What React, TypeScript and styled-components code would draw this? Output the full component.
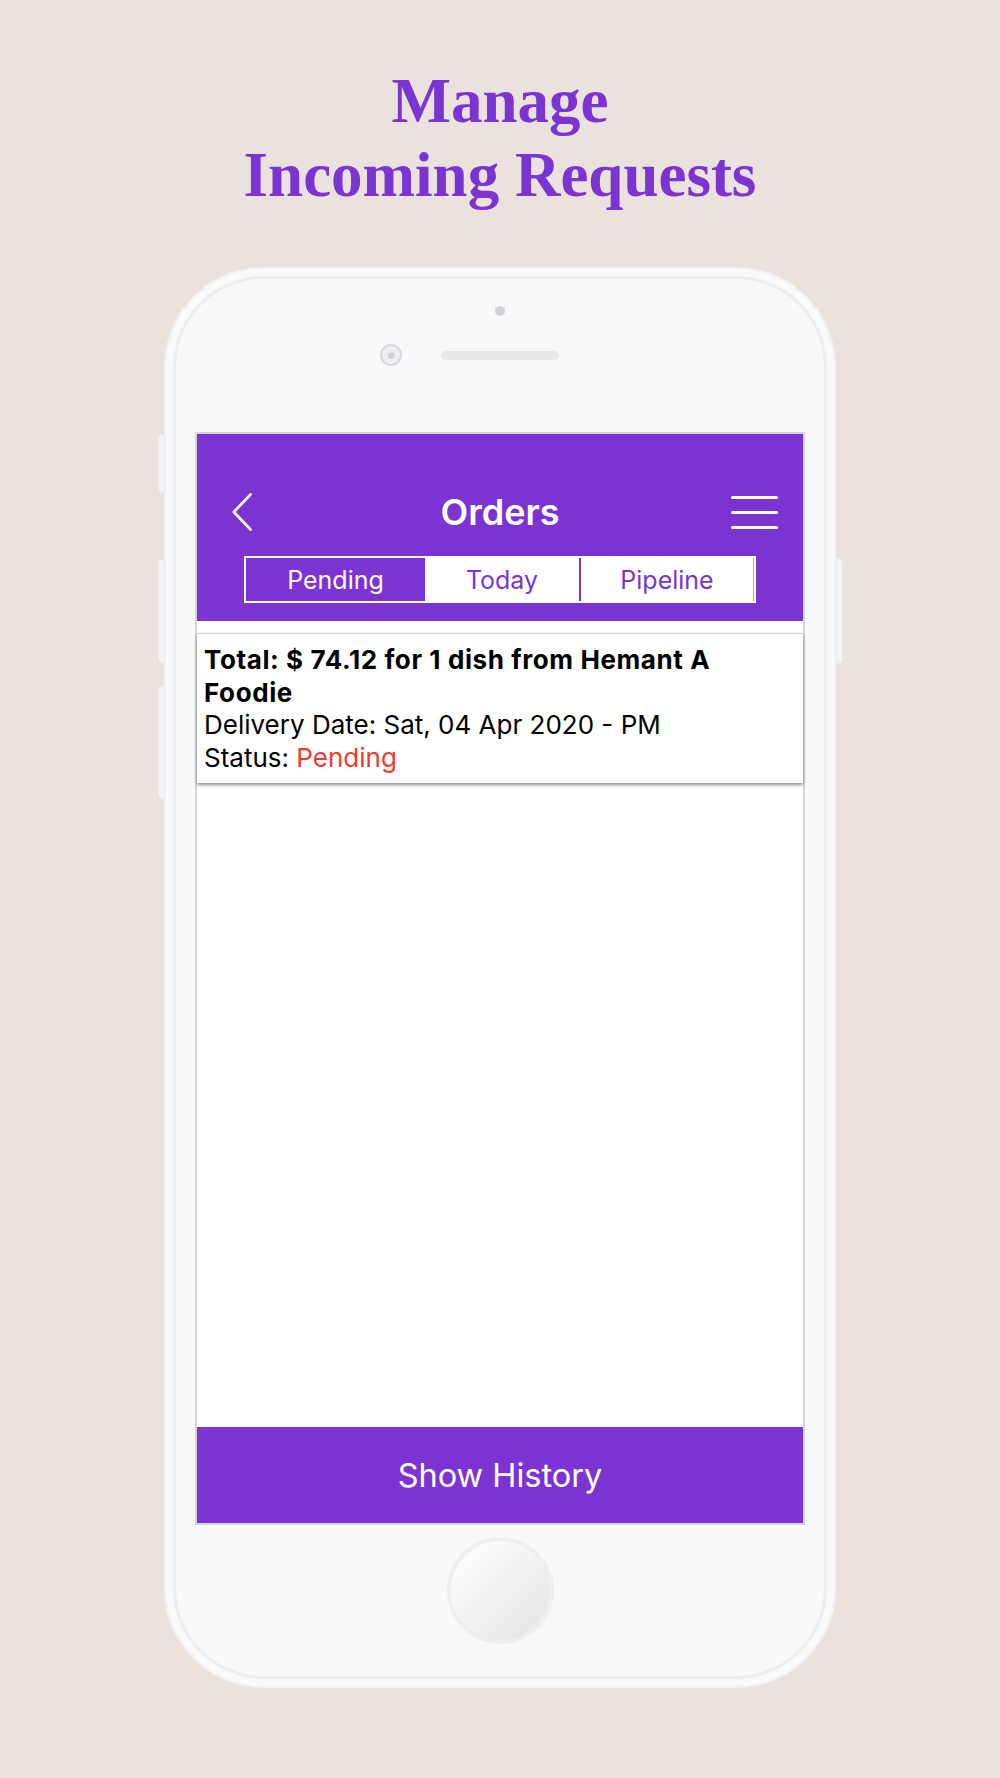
import React from "react";
import styled, { createGlobalStyle } from "styled-components";

const PURPLE = "#7b34d2";

const GlobalStyle = createGlobalStyle`
  html, body {
    margin: 0;
    padding: 0;
    background: #ece2dd;
  }
  body {
    font-family: Inter, Roboto, "Liberation Sans", sans-serif;
  }
`;

type Segment = { label: string; active?: boolean; divider?: boolean };

const segments: Segment[] = [
  { label: "Pending", active: true },
  { label: "Today" },
  { label: "Pipeline", divider: true },
];

const App = () => {
  return (
    <Page>
      <GlobalStyle />
      <Title>
        Manage
        <br />
        Incoming Requests
      </Title>
      <Phone>
        <SideButton $side="left" $top={165} $height={59} />
        <SideButton $side="left" $top={290} $height={104} />
        <SideButton $side="left" $top={417} $height={113} />
        <SideButton $side="right" $top={289} $height={106} />
        <TopBezel>
          <FrontSensor />
          <EarRow>
            <Camera />
            <Speaker />
          </EarRow>
        </TopBezel>
        <Screen>
          <Header>
            <NavRow>
              <BackButton>
                <svg width="22" height="38" viewBox="0 0 22 38" fill="none">
                  <path
                    d="M19.5 1.5 L2.8 19 L19.5 36.5"
                    stroke="#fff"
                    strokeWidth="2.6"
                    strokeLinecap="round"
                    strokeLinejoin="round"
                  />
                </svg>
              </BackButton>
              <NavTitle>Orders</NavTitle>
              <MenuButton>
                <span />
                <span />
                <span />
              </MenuButton>
            </NavRow>
            <SegmentBar>
              {segments.map((s) => (
                <SegmentItem key={s.label} $active={s.active} $divider={s.divider}>
                  {s.label}
                </SegmentItem>
              ))}
            </SegmentBar>
          </Header>
          <OrderCard>
            <OrderTitle>Total: $ 74.12 for 1 dish from Hemant A Foodie</OrderTitle>
            <OrderLine>Delivery Date: Sat, 04 Apr 2020 - PM</OrderLine>
            <OrderLine>
              Status: <StatusText>Pending</StatusText>
            </OrderLine>
          </OrderCard>
          <Filler />
          <HistoryButton>Show History</HistoryButton>
        </Screen>
        <HomeButton />
      </Phone>
    </Page>
  );
};

const Page = styled.main`
  width: 1000px;
  min-height: 1778px;
  box-sizing: border-box;
  padding-top: 64px;
  display: flex;
  flex-direction: column;
  align-items: center;
`;

const Title = styled.h1`
  margin: 0;
  font-family: "Liberation Serif", serif;
  font-weight: 700;
  font-size: 63px;
  line-height: 74px;
  color: ${PURPLE};
  text-align: center;
`;

const Phone = styled.div`
  position: relative;
  margin-top: 55px;
  width: 672px;
  height: 1421px;
  box-sizing: border-box;
  border: 2px solid #f2f3f5;
  border-radius: 100px;
  background: #f8f9fa;
  box-shadow: inset 0 0 0 7px #f9fafb, inset 0 0 0 10px #eceef0;
  display: flex;
  flex-direction: column;
  align-items: center;
`;

const SideButton = styled.div<{ $side: "left" | "right"; $top: number; $height: number }>`
  position: absolute;
  ${(p) => (p.$side === "left" ? "left: -8px;" : "right: -9px;")}
  top: ${(p) => p.$top}px;
  width: 7px;
  height: ${(p) => p.$height}px;
  background: #f3f4f6;
  border: 1px solid #e6e8eb;
  border-radius: ${(p) => (p.$side === "left" ? "4px 0 0 4px" : "0 4px 4px 0")};
  box-sizing: border-box;
`;

const TopBezel = styled.div`
  height: 163px;
  width: 100%;
  display: flex;
  flex-direction: column;
  align-items: center;
`;

const FrontSensor = styled.div`
  margin-top: 37px;
  width: 10px;
  height: 10px;
  border-radius: 50%;
  background: #d2d3d6;
`;

const EarRow = styled.div`
  margin-top: 28px;
  display: flex;
  align-items: center;
  padding-right: 61px;
`;

const Camera = styled.div`
  width: 22px;
  height: 22px;
  margin-right: 39px;
  box-sizing: border-box;
  border-radius: 50%;
  border: 2px solid #d7d8db;
  background: #eeeff1;
  display: flex;
  align-items: center;
  justify-content: center;
  &::after {
    content: "";
    width: 7px;
    height: 7px;
    border-radius: 50%;
    background: #d2d3d6;
  }
`;

const Speaker = styled.div`
  width: 118px;
  height: 9px;
  border-radius: 5px;
  background: #e8e9eb;
`;

const Screen = styled.div`
  width: 610px;
  height: 1093px;
  box-sizing: border-box;
  border: 2px solid #d5d6da;
  background: #fff;
  display: flex;
  flex-direction: column;
`;

const Header = styled.header`
  background: ${PURPLE};
  padding: 56px 0 18px;
`;

const NavRow = styled.div`
  height: 44px;
  padding: 0 25px;
  display: grid;
  grid-template-columns: 1fr auto 1fr;
  align-items: center;
`;

const BackButton = styled.div`
  display: flex;
  align-items: center;
  margin-left: 9px;
`;

const NavTitle = styled.div`
  color: #fff;
  font-size: 36px;
  font-weight: 600;
`;

const MenuButton = styled.div`
  justify-self: end;
  width: 47px;
  display: flex;
  flex-direction: column;
  gap: 12px;
  span {
    display: block;
    height: 3px;
    border-radius: 2px;
    background: #fff;
  }
`;

const SegmentBar = styled.div`
  margin: 22px auto 0;
  width: 512px;
  height: 47px;
  box-sizing: border-box;
  border: 2px solid #fff;
  display: grid;
  grid-template-columns: 179px 154px 1fr;
`;

const SegmentItem = styled.div<{ $active?: boolean; $divider?: boolean }>`
  display: flex;
  align-items: center;
  justify-content: center;
  font-size: 25px;
  background: ${(p) => (p.$active ? PURPLE : "#fff")};
  color: ${(p) => (p.$active ? "#fff" : PURPLE)};
  border-left: ${(p) => (p.$divider ? `2px solid ${PURPLE}` : "none")};
  border-right: ${(p) => (p.$divider ? "1px solid #b89be4" : "none")};
`;

const OrderCard = styled.section`
  margin-top: 12px;
  border-top: 1px solid #d2d2d6;
  padding: 10px 7px 9px;
  box-shadow: 0 2px 3px rgba(0, 0, 0, 0.45);
  font-size: 26px;
  line-height: 32.5px;
  color: #000;
`;

const OrderTitle = styled.div`
  font-weight: 700;
  letter-spacing: 0.6px;
  width: 560px;
`;

const OrderLine = styled.div``;

const StatusText = styled.span`
  color: #ef3b2f;
`;

const Filler = styled.div`
  flex: 1;
`;

const HistoryButton = styled.div`
  height: 96px;
  flex-shrink: 0;
  background: ${PURPLE};
  color: #fff;
  font-size: 32.5px;
  display: flex;
  align-items: center;
  justify-content: center;
`;

const HomeButton = styled.div`
  margin-top: 12px;
  width: 107px;
  height: 107px;
  box-sizing: border-box;
  border-radius: 50%;
  border: 4px solid #eeeff1;
  background: linear-gradient(135deg, #fbfbfc 20%, #e8e9eb 80%);
`;

export default App;
